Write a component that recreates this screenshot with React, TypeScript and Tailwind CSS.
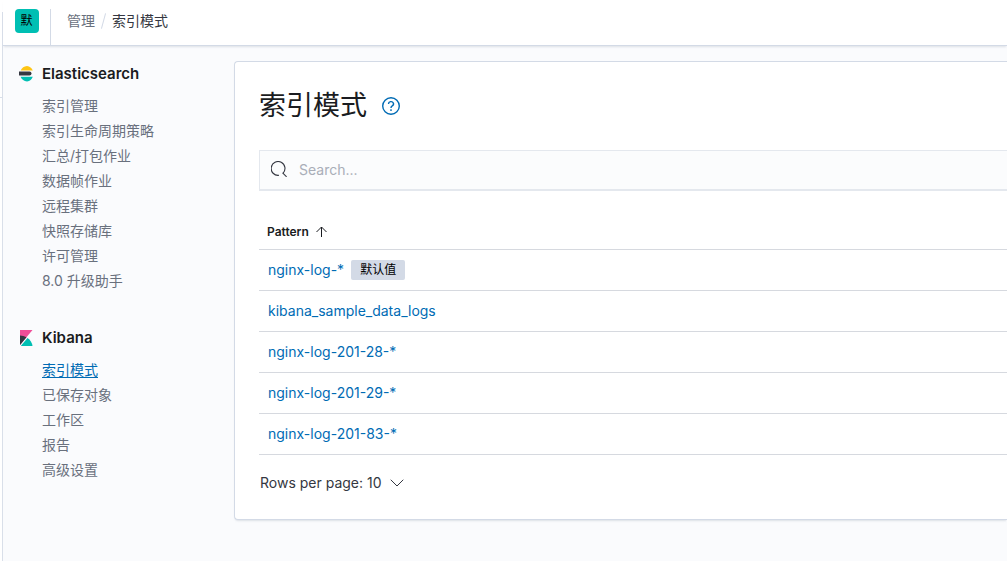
import { useState } from "react";
import type { ReactNode } from "react";

const elasticLinks = [
  "索引管理",
  "索引生命周期策略",
  "汇总/打包作业",
  "数据帧作业",
  "远程集群",
  "快照存储库",
  "许可管理",
  "8.0 升级助手",
];
const kibanaLinks = ["索引模式", "已保存对象", "工作区", "报告", "高级设置"];

const patterns = [
  { name: "nginx-log-*", isDefault: true },
  { name: "kibana_sample_data_logs", isDefault: false },
  { name: "nginx-log-201-28-*", isDefault: false },
  { name: "nginx-log-201-29-*", isDefault: false },
  { name: "nginx-log-201-83-*", isDefault: false },
];

function ElasticLogo() {
  return (
    <svg className="h-4 w-4" viewBox="0 0 16 16" aria-hidden="true">
      <path fill="#FEC514" d="M1.6 4.500h12.200A7.200 7.200 0 0 0 8 0a8 8 0 0 0-6.400 4.500z" />
      <path fill="#343741" d="M0 5.500h10.500a2 2 0 0 1 0 4H0z" />
      <path fill="#00BFB3" d="M1.600 10.700h12.200A7.200 7.200 0 0 1 8 15.500a8 8 0 0 1-6.400-4.800z" />
    </svg>
  );
}

function KibanaLogo() {
  return (
    <svg className="h-4 w-4" viewBox="0 0 16 16" aria-hidden="true">
      <path fill="#F04E98" d="M1 0v15L13.500 0z" />
      <path fill="#343741" d="M1 5.500V15l6.500-7.800A13 13 0 0 0 1 5.500z" />
      <path fill="#00BFB3" d="M8.500 8 2 15.800V16h11.500a11.500 11.500 0 0 0-5-8z" />
    </svg>
  );
}

function NavSection({
  title,
  logo,
  links,
  active,
}: {
  title: string;
  logo: ReactNode;
  links: string[];
  active?: string;
}) {
  return (
    <section>
      <h2 className="flex h-6 items-center gap-[7px] text-[15px] font-semibold text-[#1a1c21]">
        {logo}
        {title}
      </h2>
      <ul className="mt-[7px] pl-[23px]">
        {links.map((link) => (
          <li key={link} className="flex h-[25px] items-center">
            <a
              href="#"
              className={
                link === active
                  ? "text-[#006bb4] underline underline-offset-2"
                  : "text-[#69707d] hover:underline"
              }
            >
              {link}
            </a>
          </li>
        ))}
      </ul>
    </section>
  );
}

export default function App() {
  const [query, setQuery] = useState("");
  const rows = patterns.filter((p) => p.name.includes(query));

  return (
    <div className="flex min-h-screen overflow-x-hidden bg-[#fafbfd] font-['Inter','Noto_Sans_CJK_SC',sans-serif] text-sm text-[#343741]">
      <div className="flex w-[3px] shrink-0 flex-col bg-white pt-3">
        <div className="h-[86px] border-r border-b border-[#d9dfe9]" />
        <div className="grow border-r border-[#d9dfe9]" />
      </div>
      <div className="flex min-w-0 grow flex-col">
        <header className="flex h-[46px] shrink-0 items-end border-b border-[#d3dae6] bg-white shadow-[0_2px_2px_-1px_rgba(152,162,179,0.3)]">
          <div className="flex h-9 w-12 shrink-0 justify-center border-r border-[#d3dae6]">
            <button
              type="button"
              className="flex h-6 w-6 items-center justify-center rounded bg-[#00bfb3] text-xs text-black"
            >
              默
            </button>
          </div>
          <nav aria-label="breadcrumb" className="flex h-[34px] items-start gap-2 pl-4 leading-5">
            <a href="#" className="text-[#69707d]">
              管理
            </a>
            <span className="mt-0.5 h-4 w-px rotate-15 bg-[#d3dae6]" />
            <span>索引模式</span>
          </nav>
        </header>
        <div className="flex grow">
          <aside className="flex w-[231px] shrink-0 flex-col gap-[33px] px-4 pt-4">
            <NavSection title="Elasticsearch" logo={<ElasticLogo />} links={elasticLinks} />
            <NavSection title="Kibana" logo={<KibanaLogo />} links={kibanaLinks} active="索引模式" />
          </aside>
          <main className="min-w-0 grow pt-[15px]">
            <div className="rounded-l border border-r-0 border-[#d3dae6] bg-white py-6 pl-6 shadow-[0_2px_2px_-1px_rgba(152,162,179,0.3)]">
              <div className="flex h-10 items-center gap-3.5">
                <h1 className="text-[27px] text-[#1a1c21]">索引模式</h1>
                <button type="button" aria-label="帮助" className="text-[#006bb4]">
                  <svg className="h-5 w-5" viewBox="0 0 20 20" fill="none" stroke="currentColor" strokeWidth="1.4">
                    <circle cx="10" cy="10" r="8.300" />
                    <path d="M7.500 8a2.500 2.300 0 1 1 3.800 1.900c-.9.500-1.300.9-1.300 2" />
                    <path d="M10 13.300v1.600" />
                  </svg>
                </button>
              </div>
              <label className="mt-6 flex h-[41px] items-center border border-r-0 border-b-2 border-[#e4e8ee] bg-[#fbfcfd] pb-0.5 pl-[11px]">
                <svg className="h-4 w-4 shrink-0" viewBox="0 0 16 16" fill="none" stroke="#343741" strokeWidth="1.1">
                  <path d="M8 14.300A6.900 6.900 0 1 1 12 12.300" />
                  <path d="m11.600 11.800 4 4" />
                </svg>
                <input
                  type="text"
                  aria-label="Search"
                  placeholder="Search..."
                  value={query}
                  onChange={(e) => setQuery(e.target.value)}
                  className="ml-3 h-full min-w-0 grow bg-transparent outline-none placeholder:text-[#a9aeb8]"
                />
              </label>
              <table className="mt-6 w-full border-collapse">
                <thead>
                  <tr className="h-[34px] border-b border-[#d6d9df]">
                    <th className="pl-2 text-left text-xs font-semibold text-[#1a1c21]">
                      <button type="button" className="flex items-center gap-1">
                        Pattern
                        <svg className="h-4 w-4" viewBox="0 0 16 16" fill="none" stroke="currentColor">
                          <path d="M8.500 13V3M3.500 8l5-5 5 5" />
                        </svg>
                      </button>
                    </th>
                  </tr>
                </thead>
                <tbody>
                  {rows.map((row) => (
                    <tr key={row.name} className="h-[41px] border-b border-[#d6d9df]">
                      <td className="pl-[9px]">
                        <div className="flex items-center gap-[7px]">
                          <a href="#" className="text-[#006bb4]">
                            {row.name}
                          </a>
                          {row.isDefault && (
                            <span className="flex h-5 items-center rounded-xs bg-[#d3dae6] px-[9px] text-xs text-black">
                              默认值
                            </span>
                          )}
                        </div>
                      </td>
                    </tr>
                  ))}
                </tbody>
              </table>
              <button type="button" className="mt-4 flex h-6 items-center gap-[7px] pl-px">
                Rows per page: 10
                <svg className="h-4 w-4" viewBox="0 0 16 16" fill="none" stroke="currentColor" strokeLinecap="round">
                  <path d="m2 5 6 6 6-6" />
                </svg>
              </button>
            </div>
          </main>
        </div>
      </div>
    </div>
  );
}
